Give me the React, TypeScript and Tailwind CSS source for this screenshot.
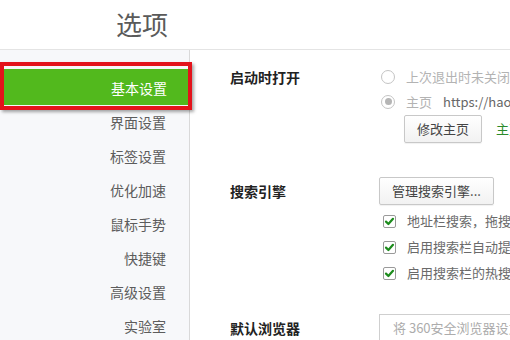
import React from 'react';

const menu = ['界面设置', '标签设置', '优化加速', '鼠标手势', '快捷键', '高级设置', '实验室'];

const checks = [
  '地址栏搜索，拖搜及右键搜索使用默认搜索引擎',
  '启用搜索栏自动提示',
  '启用搜索栏的热搜推荐',
];

const Radio: React.FC<{ checked?: boolean }> = ({ checked }) => (
  <span className="w-[14px] h-[14px] rounded-full border border-[#c4c4c4] bg-white flex items-center justify-center shrink-0">
    {checked && <span className="w-[7px] h-[7px] rounded-full bg-[#b5b5b5]" />}
  </span>
);

const Check: React.FC = () => (
  <span className="w-[13px] h-[13px] rounded-[2px] border border-[#9a9a9a] bg-white flex items-center justify-center shrink-0">
    <svg width="11" height="11" viewBox="0 0 11 11">
      <path d="M2 5.6 L4.4 8 L9 2.8" fill="none" stroke="#1d8c1d" strokeWidth="2.2" strokeLinecap="round" strokeLinejoin="round" />
    </svg>
  </span>
);

export default function App() {
  return (
    <div
      className="relative w-[510px] h-[340px] overflow-hidden bg-white"
      style={{ fontFamily: '"Microsoft YaHei", "Noto Sans CJK SC", "Noto Sans", sans-serif' }}
    >
      {/* header */}
      <div className="h-[50px] border-b border-[#e4e4e4] flex">
        <div className="w-[189px] text-right pr-[21px] pt-[11px] text-[26px] leading-[26px] text-[#5a5a5a]">选项</div>
      </div>

      <div className="flex h-[290px]">
        {/* sidebar */}
        <div className="w-[190px] shrink-0 bg-[#f7f8fa] border-r border-[#d9d9d9] pt-[19px]">
          <div className="ml-[4px] h-[36px] bg-[#52b91d] text-white text-[14px] text-right pr-[22px] pt-[1px] leading-[36px]">
            基本设置
          </div>
          {menu.map((m) => (
            <div key={m} className="h-[34px] text-[14px] leading-[34px] text-right pr-[23px] text-[#5c5c5c]">
              {m}
            </div>
          ))}
        </div>

        {/* content */}
        <div className="flex-1 pl-[40px] pt-[14px] text-[13px] whitespace-nowrap">
          {/* 启动时打开 */}
          <div className="flex">
            <div className="w-[149px] shrink-0 font-bold text-[14px] text-[#222] leading-[25px] pt-[1px]">启动时打开</div>
            <div className="flex flex-col">
              <div className="h-[25px] flex items-center gap-[11px] pl-[2px] text-[#b3b3b3]">
                <Radio />
                <span>上次退出时未关闭的页面</span>
              </div>
              <div className="h-[25px] flex items-center gap-[11px] pl-[2px] text-[#b3b3b3]">
                <Radio checked />
                <span>主页</span>
                <span className="text-[#666]">https://hao.360.com/</span>
              </div>
              <div className="mt-[1px] flex items-center gap-[14px] pl-[25px]">
                <button className="w-[78px] h-[28px] border border-[#c8c8c8] rounded-[2px] bg-gradient-to-b from-white to-[#f2f2f2] text-[#444] shadow-[0_1px_1px_rgba(0,0,0,0.06)]">
                  修改主页
                </button>
                <span className="text-[#2b8a2b]">主页已锁定保护</span>
              </div>
            </div>
          </div>

          {/* 搜索引擎 */}
          <div className="flex mt-[34px]">
            <div className="w-[149px] shrink-0 font-bold text-[14px] text-[#222] leading-[28px]">搜索引擎</div>
            <div className="flex flex-col">
              <button className="w-[115px] h-[28px] border border-[#c8c8c8] rounded-[2px] bg-gradient-to-b from-white to-[#f2f2f2] text-[#444] shadow-[0_1px_1px_rgba(0,0,0,0.06)]">
                管理搜索引擎...
              </button>
              <div className="mt-[3px] flex flex-col">
                {checks.map((c) => (
                  <div key={c} className="h-[26px] flex items-center gap-[11px] pl-[4px] text-[#6a6a6a]">
                    <Check />
                    <span>{c}</span>
                  </div>
                ))}
              </div>
            </div>
          </div>

          {/* 默认浏览器 */}
          <div className="flex mt-[28px]">
            <div className="w-[149px] shrink-0 font-bold text-[14px] text-[#222] leading-[28px]">默认浏览器</div>
            <div className="w-[220px] h-[28px] border border-[#cfcfcf] pl-[13px] leading-[26px] text-[#acacac]">
              将 360安全浏览器设为默认浏览器
            </div>
          </div>
        </div>
      </div>

      {/* red highlight annotation */}
      <div className="absolute left-0 top-[62px] w-[192px] h-[48px] border-4 border-[#e3131b] shadow-[2px_2px_3px_rgba(0,0,0,0.35)] pointer-events-none" />
    </div>
  );
}
